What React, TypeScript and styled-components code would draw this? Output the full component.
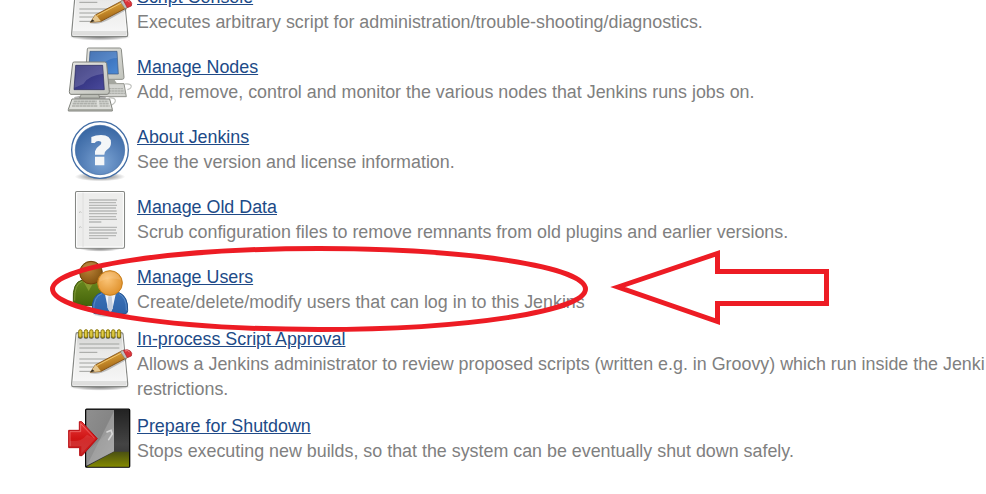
import React from "react";
import styled, { createGlobalStyle } from "styled-components";

const GlobalStyle = createGlobalStyle`
  html, body { margin: 0; padding: 0; background: #fff; }
  body { font-family: "Liberation Sans", Arial, Helvetica, sans-serif; }
`;

const Page = styled.main`
  position: relative;
  box-sizing: border-box;
  width: 986px;
  height: 494px;
  overflow: hidden;
  background: #fff;
`;

const List = styled.div`
  display: flex;
  flex-direction: column;
  margin-top: -25px;
  padding-left: 68px;
`;

const Row = styled.section<{ $tall?: boolean }>`
  display: flex;
  align-items: flex-start;
  gap: 5px;
  box-sizing: border-box;
  height: ${(p) => (p.$tall ? 79 : 70)}px;
  padding-top: 3px;
`;

const Copy = styled.div<{ $tall?: boolean }>`
  flex: none;
  margin-top: ${(p) => (p.$tall ? -1 : 7)}px;
  font-size: 17.86px;
  line-height: 25px;
  white-space: nowrap;
`;

const Title = styled.a`
  display: block;
  width: max-content;
  color: #204a87;
  text-decoration: underline;
`;

const Description = styled.div`
  color: #808080;
`;

const IconSvg = styled.svg`
  flex: none;
  display: block;
  width: 64px;
  height: 64px;
  overflow: visible;
`;

const Annotation = styled.svg`
  position: absolute;
  inset: 0;
  width: 986px;
  height: 494px;
  pointer-events: none;
`;

const Defs = () => (
  <defs>
    <linearGradient id="paper" x1="0" y1="0" x2="0" y2="1">
      <stop offset="0" stopColor="#d0d1cf" />
      <stop offset=".35" stopColor="#e9e9e8" />
      <stop offset="1" stopColor="#f8f8f8" />
    </linearGradient>
    <linearGradient id="shell" x1="0" y1="0" x2="1" y2="1">
      <stop offset="0" stopColor="#e6e6e2" />
      <stop offset="1" stopColor="#c2c4bd" />
    </linearGradient>
    <linearGradient id="navy" x1="0" y1="0" x2="1" y2="1">
      <stop offset="0" stopColor="#25256f" />
      <stop offset="1" stopColor="#4a4a9c" />
    </linearGradient>
    <linearGradient id="sky" x1="0" y1="0" x2="1" y2="1">
      <stop offset="0" stopColor="#2a5da8" />
      <stop offset="1" stopColor="#4d8ad4" />
    </linearGradient>
    <radialGradient id="help" cx=".55" cy=".75" r=".8">
      <stop offset="0" stopColor="#7ba3d3" />
      <stop offset=".5" stopColor="#5580b8" />
      <stop offset="1" stopColor="#33629f" />
    </radialGradient>
    <radialGradient id="shade">
      <stop offset="0" stopColor="#000" stopOpacity=".5" />
      <stop offset=".6" stopColor="#000" stopOpacity=".25" />
      <stop offset="1" stopColor="#000" stopOpacity="0" />
    </radialGradient>
    <radialGradient id="brown" cx=".4" cy=".35" r=".7">
      <stop offset="0" stopColor="#b98136" />
      <stop offset="1" stopColor="#80500e" />
    </radialGradient>
    <radialGradient id="gold" cx=".4" cy=".35" r=".75">
      <stop offset="0" stopColor="#fbc477" />
      <stop offset="1" stopColor="#dd8c24" />
    </radialGradient>
    <linearGradient id="green" x1="0" y1="0" x2="0" y2="1">
      <stop offset="0" stopColor="#6b8a20" />
      <stop offset="1" stopColor="#44640a" />
    </linearGradient>
    <linearGradient id="blue" x1="0" y1="0" x2="0" y2="1">
      <stop offset="0" stopColor="#3a70b6" />
      <stop offset="1" stopColor="#2d62a8" />
    </linearGradient>
    <linearGradient id="wood" x1="0" y1="0" x2=".5" y2="1">
      <stop offset="0" stopColor="#e5b052" />
      <stop offset=".5" stopColor="#cd922f" />
      <stop offset="1" stopColor="#995d12" />
    </linearGradient>
    <linearGradient id="door" x1="0" y1="0" x2="1" y2="1">
      <stop offset="0" stopColor="#8f8f8f" />
      <stop offset=".5" stopColor="#858585" />
      <stop offset=".52" stopColor="#999" />
      <stop offset="1" stopColor="#aaa" />
    </linearGradient>
    <linearGradient id="room" x1="0" y1="0" x2="0" y2="1">
      <stop offset="0" stopColor="#222" />
      <stop offset=".6" stopColor="#444" />
      <stop offset="1" stopColor="#303030" />
    </linearGradient>
    <linearGradient id="floor" x1="0" y1="0" x2="0" y2="1">
      <stop offset="0" stopColor="#4a5012" />
      <stop offset="1" stopColor="#828800" />
    </linearGradient>
    <linearGradient id="red" x1="0" y1="0" x2="0" y2="1">
      <stop offset="0" stopColor="#e83a3a" />
      <stop offset=".5" stopColor="#cf1414" />
      <stop offset="1" stopColor="#c62020" />
    </linearGradient>
  </defs>
);

const Notepad = () => (
  <IconSvg viewBox="24 18 192 192">
    <ellipse cx="120" cy="195" rx="92" ry="11" fill="url(#shade)" />
    <path d="M48 36Q48 32 52 32H184Q188 32 189 36L203 184V190Q203 194 198 194H40Q35 194 35 190V184Z" fill="url(#paper)" stroke="#858784" strokeWidth="3.5" />
    <path d="M38 180H200" stroke="#c9cac8" strokeWidth="3" />
    <path d="M39 186H199" stroke="#dededd" strokeWidth="9" />
    <path d="M51 38L40 176M186 38L199 176" stroke="#fff" strokeWidth="2" />
    <path d="M58 66H178M58 78H178M58 91H112M58 111H170M58 123H140M58 135H110M58 148H100" stroke="#a0a29f" strokeWidth="3" />
    {[61, 78, 94, 111, 128, 144, 160, 177].map((x) => (
      <g key={x}>
        <ellipse cx={x} cy="45" rx="7" ry="5" fill="#4d4f3d" />
        <rect x={x - 5} y="23" width="10" height="24" rx="5" fill="#d2bd30" stroke="#8d7b12" strokeWidth="3" />
        <path d={`M${x - 1} 27V42`} stroke="#eddd61" strokeWidth="2" />
      </g>
    ))}
    <path d="M88 153Q115 160 145 144L200 113V103L120 148Z" fill="#555" opacity=".35" />
    <path d="M91 151L106 129L187 86L201 107L123 148Z" fill="url(#wood)" stroke="#7d4a0d" strokeWidth="2.5" strokeLinejoin="round" />
    <path d="M91 151L106 129L113 134L117 140L123 148Z" fill="#e6c78e" />
    <path d="M91 151L97 142L104 148Z" fill="#302c24" />
    <path d="M110 131L188 91" stroke="#f0c66f" strokeWidth="3" />
    <path d="M181 89L193 83L208 103L195 110Z" fill="#bfc1bf" stroke="#777" strokeWidth="1.5" />
    <path d="M190 85Q203 80 211 87Q218 94 214 102L202 107Z" fill="#dc343a" stroke="#aa2027" strokeWidth="2" />
    <path d="M195 87Q204 83 209 90" stroke="#f18a8c" strokeWidth="3" fill="none" />
  </IconSvg>
);

const Computers = () => (
  <IconSvg viewBox="24 18 192 192">
    <path d="M194 126C219 123 219 139 202 143M146 168C169 165 173 179 154 190" fill="none" stroke="#c1c3bf" strokeWidth="3.5" />
    <path d="M103 125H192L199 164H103Z" fill="#d2d3cf" stroke="#92948e" strokeWidth="3" />
    <path d="M145 140H190M145 147H193M145 154H195" stroke="#b0b2ad" strokeWidth="4" strokeDasharray="8 1" />
    <path d="M82 21Q82 18 86 18H179Q183 18 184 22L192 106Q192 112 187 112H80Q76 112 76 107Z" fill="url(#shell)" stroke="#8a8c86" strokeWidth="3" />
    <path d="M90 28H171L175 96H86Z" fill="url(#sky)" stroke="#3a5681" strokeWidth="2" />
    <path d="M91 29H170L171 48Q130 50 118 87L88 94Z" fill="#fff" opacity=".14" />
    <path d="M122 114H164L172 126H115Z" fill="#a4a69f" />
    <ellipse cx="90" cy="168" rx="48" ry="8" fill="#777" opacity=".55" />
    <path d="M65 154H115L119 168H59Z" fill="#babcb5" stroke="#777970" strokeWidth="2" />
    <path d="M38 64Q38 60 43 60H134Q139 60 140 65L148 149Q148 157 141 157H33Q28 157 28 149Z" fill="url(#shell)" stroke="#7e807a" strokeWidth="3" />
    <path d="M47 70H128L133 143H42Z" fill="url(#navy)" stroke="#28285c" strokeWidth="2" />
    <path d="M48 71H127L130 95Q82 101 70 126L44 137Z" fill="#fff" opacity=".17" />
    <path d="M36 171H149L157 202V207H25V202Z" fill="#dddeda" stroke="#80827c" strokeWidth="3" />
    <path d="M41 178H110M38 185H110M36 192H112" stroke="#aeb0ab" strokeWidth="5" strokeDasharray="10 1" />
    <path d="M117 178H145M118 185H147M119 192H149" stroke="#b2b4af" strokeWidth="5" strokeDasharray="8 1" />
    <path d="M26 204H156" stroke="#969890" strokeWidth="4" />
  </IconSvg>
);

const Help = () => (
  <IconSvg viewBox="24 9 192 192">
    <ellipse cx="120" cy="185" rx="76" ry="14" fill="url(#shade)" />
    <circle cx="120" cy="105" r="85" fill="#fff" stroke="#426da5" strokeWidth="4" />
    <circle cx="120" cy="105" r="74" fill="url(#help)" stroke="#3b68a2" strokeWidth="2" />
    <path d="M94 66Q107 60 123 60Q153 60 153 84Q153 97 140 105Q133 110 133 119H105V109Q106 100 117 93Q124 89 124 84Q124 78 115 78Q108 78 104 84H94ZM105 125H133V151H105Z" fill="#f4f6f8" />
  </IconSvg>
);

const Document = () => (
  <IconSvg viewBox="24 9 192 192">
    <ellipse cx="120" cy="191" rx="62" ry="9" fill="url(#shade)" />
    <rect x="46.500" y="19.500" width="147" height="170" rx="4" fill="#ededec" stroke="#858784" strokeWidth="3.2" />
    <rect x="50" y="23" width="140" height="163" rx="1" fill="none" stroke="#fff" strokeWidth="3" />
    <path d="M69 23V186" stroke="#d7d7d6" strokeWidth="2" />
    <path d="M57 83Q62 77 64 83M57 128Q62 122 64 128" stroke="#bebfbd" strokeWidth="3" fill="none" />
    <path d="M87 45H171M87 53H168M87 61H171M87 69H168M87 78H170M87 86H171M87 95H168M87 103H171M87 111H124M87 127H171M87 135H168M87 144H171M87 152H168M87 160H145" stroke="#b7b8b6" strokeWidth="4" />
  </IconSvg>
);

const Users = () => (
  <IconSvg viewBox="69 54 192 192">
    <ellipse cx="198" cy="222" rx="57" ry="11" fill="url(#shade)" />
    <ellipse cx="125" cy="192" rx="46" ry="9" fill="url(#shade)" />
    <path d="M85 184Q81 125 113 120L145 116Q171 119 175 153V194Q128 201 93 192Q86 190 85 184Z" fill="url(#green)" stroke="#3f5a0c" strokeWidth="3" />
    <path d="M89 182Q87 132 112 124" fill="none" stroke="#91a84b" strokeWidth="2" />
    <path d="M113 121L131 153L151 118Z" fill="#86992f" />
    <circle cx="138" cy="98" r="34" fill="url(#brown)" stroke="#704108" strokeWidth="3" />
    <path d="M110 94Q112 68 139 67Q161 68 167 85Q131 75 110 94Z" fill="#d1a061" opacity=".3" />
    <path d="M142 213Q139 166 170 157H220Q250 168 248 212Q248 220 240 221Q195 228 151 221Q143 220 142 213Z" fill="url(#blue)" stroke="#23528e" strokeWidth="3" />
    <path d="M146 212Q145 169 171 161M244 211Q245 173 222 161" fill="none" stroke="#6d9bd2" strokeWidth="2" />
    <path d="M180 163H212L203 205L196 220L188 202Z" fill="#eff2f7" />
    <path d="M190 169H200L204 204L196 219L187 203Z" fill="#c4cddd" />
    <circle cx="195" cy="129" r="37" fill="url(#gold)" stroke="#c77d19" strokeWidth="3" />
    <path d="M163 126Q165 96 195 96Q221 97 228 119Q190 109 163 126Z" fill="#ffe1b7" opacity=".2" />
  </IconSvg>
);

const Shutdown = () => (
  <IconSvg viewBox="24 15 192 192">
    <rect x="77" y="21.500" width="132" height="174" rx="3" fill="url(#room)" stroke="#080808" strokeWidth="4" />
    <path d="M80 194L162 149H207V194Z" fill="url(#floor)" />
    <path d="M79 24H162V148L79 191Z" fill="url(#door)" />
    <path d="M79 151L162 76V148L79 191Z" fill="#b1b1b1" opacity=".3" />
    <path d="M141 90L153 85L157 96L146 113" fill="none" stroke="#d7d7d7" strokeWidth="5" strokeLinecap="round" />
    <path d="M26 85H58V59H65L112 110L66 161H59V137H26Z" fill="url(#red)" stroke="#b70e14" strokeWidth="3" strokeLinejoin="round" />
    <path d="M30 133V89H62V65L104 109" fill="none" stroke="#f38080" strokeWidth="2" />
    <path d="M30 116Q61 122 81 98L106 110L64 155V133H30Z" fill="#fff" opacity=".1" />
  </IconSvg>
);

const items = [
  { title: "Script Console", icon: Notepad, lines: ["Executes arbitrary script for administration/trouble-shooting/diagnostics."] },
  { title: "Manage Nodes", icon: Computers, lines: ["Add, remove, control and monitor the various nodes that Jenkins runs jobs on."] },
  { title: "About Jenkins", icon: Help, lines: ["See the version and license information."] },
  { title: "Manage Old Data", icon: Document, lines: ["Scrub configuration files to remove remnants from old plugins and earlier versions."] },
  { title: "Manage Users", icon: Users, lines: ["Create/delete/modify users that can log in to this Jenkins"] },
  {
    title: "In-process Script Approval",
    icon: Notepad,
    lines: ["Allows a Jenkins administrator to review proposed scripts (written e.g. in Groovy) which run inside the Jenki", "restrictions."],
  },
  { title: "Prepare for Shutdown", icon: Shutdown, lines: ["Stops executing new builds, so that the system can be eventually shut down safely."] },
];

export default function App() {
  return (
    <Page>
      <GlobalStyle />
      <List>
        {items.map(({ title, icon: Icon, lines }) => (
          <Row key={title} $tall={lines.length > 1}>
            <Icon />
            <Copy $tall={lines.length > 1}>
              <Title>{title}</Title>
              {lines.map((line) => (
                <Description key={line}>{line}</Description>
              ))}
            </Copy>
          </Row>
        ))}
      </List>
      <Annotation viewBox="0 0 986 494" fill="none" stroke="#ed1c24" strokeWidth="5">
        <Defs />
        <ellipse cx="319" cy="289" rx="266.500" ry="40.500" />
        <path d="M618 287L717.500 253.500V271.500H826.500V303.500H717.500V321.500Z" strokeMiterlimit="10" />
      </Annotation>
    </Page>
  );
}
